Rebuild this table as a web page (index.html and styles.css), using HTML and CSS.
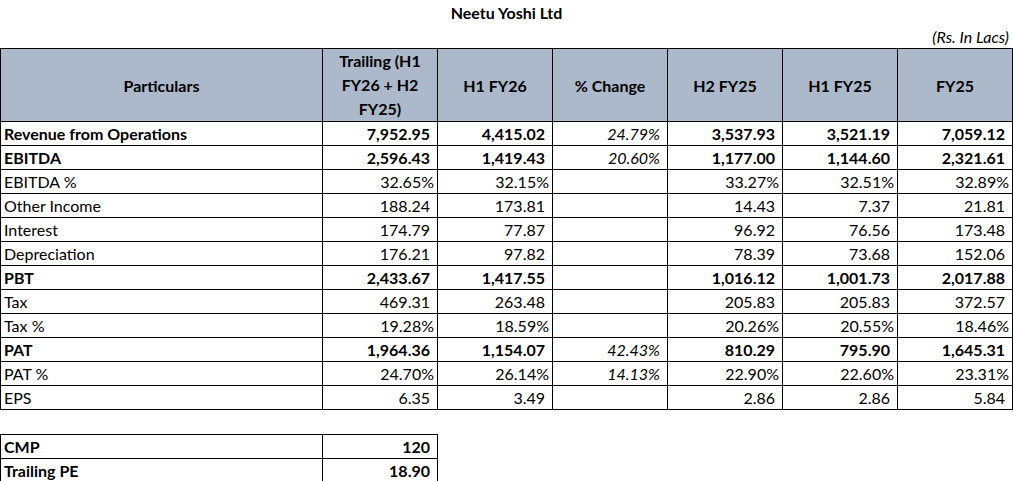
FILE: index.html
```html
<!DOCTYPE html>
<html>
<head>
<meta charset="utf-8">
<link rel="stylesheet" href="styles.css">
</head>
<body>
<div class="sheet">
  <div class="title">Neetu Yoshi Ltd</div>
  <div class="unit">(Rs. In Lacs)</div>
  <table class="grid main">
    <colgroup><col class="c-label"><col><col><col><col><col><col></colgroup>
    <thead>
      <tr>
        <th>Particulars</th>
        <th class="tall">Trailing (H1<br>FY26 + H2<br>FY25)</th>
        <th>H1 FY26</th>
        <th>% Change</th>
        <th>H2 FY25</th>
        <th>H1 FY25</th>
        <th>FY25</th>
      </tr>
    </thead>
    <tbody>
      <tr class="b"><td>Revenue from Operations</td><td class="n">7,952.95</td><td class="n">4,415.02</td><td class="n it">24.79%</td><td class="n">3,537.93</td><td class="n">3,521.19</td><td class="n">7,059.12</td></tr>
      <tr class="b"><td>EBITDA</td><td class="n">2,596.43</td><td class="n">1,419.43</td><td class="n it">20.60%</td><td class="n">1,177.00</td><td class="n">1,144.60</td><td class="n">2,321.61</td></tr>
      <tr><td>EBITDA %</td><td class="p">32.65%</td><td class="p">32.15%</td><td></td><td class="p">33.27%</td><td class="p">32.51%</td><td class="p">32.89%</td></tr>
      <tr><td>Other Income</td><td class="n">188.24</td><td class="n">173.81</td><td></td><td class="n">14.43</td><td class="n">7.37</td><td class="n">21.81</td></tr>
      <tr><td>Interest</td><td class="n">174.79</td><td class="n">77.87</td><td></td><td class="n">96.92</td><td class="n">76.56</td><td class="n">173.48</td></tr>
      <tr><td>Depreciation</td><td class="n">176.21</td><td class="n">97.82</td><td></td><td class="n">78.39</td><td class="n">73.68</td><td class="n">152.06</td></tr>
      <tr class="b"><td>PBT</td><td class="n">2,433.67</td><td class="n">1,417.55</td><td></td><td class="n">1,016.12</td><td class="n">1,001.73</td><td class="n">2,017.88</td></tr>
      <tr><td>Tax</td><td class="n">469.31</td><td class="n">263.48</td><td></td><td class="n">205.83</td><td class="n">205.83</td><td class="n">372.57</td></tr>
      <tr><td>Tax %</td><td class="p">19.28%</td><td class="p">18.59%</td><td></td><td class="p">20.26%</td><td class="p">20.55%</td><td class="p">18.46%</td></tr>
      <tr class="b"><td>PAT</td><td class="n">1,964.36</td><td class="n">1,154.07</td><td class="n it">42.43%</td><td class="n">810.29</td><td class="n">795.90</td><td class="n">1,645.31</td></tr>
      <tr><td>PAT %</td><td class="p">24.70%</td><td class="p">26.14%</td><td class="n it">14.13%</td><td class="p">22.90%</td><td class="p">22.60%</td><td class="p">23.31%</td></tr>
      <tr><td>EPS</td><td class="n">6.35</td><td class="n">3.49</td><td></td><td class="n">2.86</td><td class="n">2.86</td><td class="n">5.84</td></tr>
    </tbody>
  </table>
  <table class="grid small">
    <colgroup><col class="c-label"><col></colgroup>
    <tbody>
      <tr class="b"><td>CMP</td><td class="n">120</td></tr>
      <tr class="b"><td>Trailing PE</td><td class="n">18.90</td></tr>
    </tbody>
  </table>
</div>
</body>
</html>
```
FILE: styles.css
```css
html, body {
  margin: 0;
  padding: 0;
  background: #ffffff;
}
body {
  font-family: Lato, "Liberation Sans", sans-serif;
  font-size: 16px;
  color: #000000;
}
.sheet {
  width: 1013px;
}
.title {
  height: 24px;
  line-height: 26px;
  text-align: center;
  font-weight: bold;
}
.unit {
  height: 24px;
  line-height: 26px;
  text-align: right;
  font-style: italic;
  padding-right: 4px;
}
.grid {
  border-collapse: collapse;
  table-layout: fixed;
}
.main {
  width: 1013px;
}
.small {
  width: 438px;
  margin-top: 24px;
}
.c-label {
  width: 322px;
}
.grid th,
.grid td {
  border: 1px solid #000000;
  padding: 0 3px;
  height: 23px;
  line-height: 23px;
  white-space: nowrap;
  overflow: hidden;
}
.grid th {
  background: #acb9ca;
  font-weight: bold;
  text-align: center;
  vertical-align: middle;
  height: 71px;
}
.grid th.tall {
  line-height: 24px;
}
.grid td {
  text-align: left;
}
.grid td.n {
  text-align: right;
  padding-right: 7px;
}
.grid td.p {
  text-align: right;
  padding-right: 3px;
}
.grid td.it {
  font-style: italic;
  font-weight: normal;
}
.b td {
  font-weight: bold;
}
.b td.it {
  font-weight: normal;
}
```
